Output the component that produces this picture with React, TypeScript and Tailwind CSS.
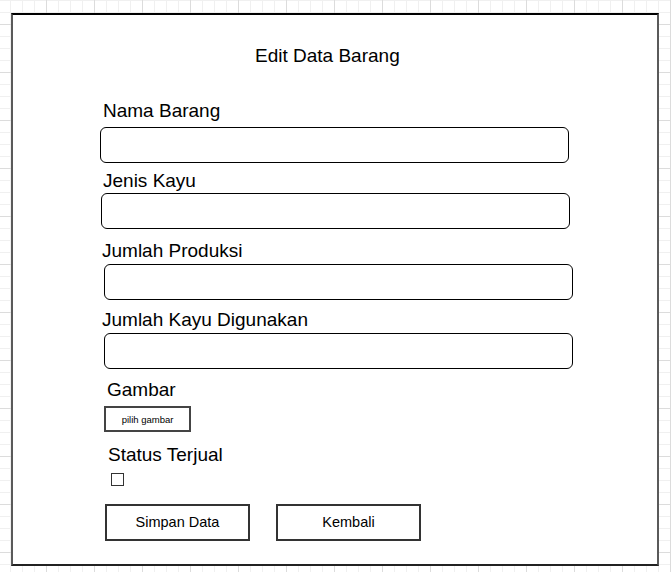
export default function App() {
  const label = 'text-[19px] leading-[22px] text-black';
  const input = 'h-9 w-[469px] rounded-[6px] border border-black bg-white';

  return (
    <div
      className="w-[671px] h-[572px] overflow-hidden bg-white pt-[13px] pl-[11px] bg-[linear-gradient(to_right,#dcdcdc_1px,transparent_1px),linear-gradient(to_bottom,#dcdcdc_1px,transparent_1px),linear-gradient(to_right,#f0f0f0_1px,transparent_1px),linear-gradient(to_bottom,#f0f0f0_1px,transparent_1px)] bg-size-[48px_48px,48px_48px,12px_12px,12px_12px] bg-position-[46px_24px,46px_24px,10px_0px,10px_0px]"
      style={{ fontFamily: '"Liberation Sans", Arial, sans-serif' }}
    >
      {/* Bingkai form */}
      <div className="w-[648px] h-[553px] border-2 border-[#5a5a5a] border-t-black border-b-[#222] bg-white flex flex-col">
        <h1 className="mt-[30px] ml-[242px] text-[19px] leading-[22px] text-black">Edit Data Barang</h1>

        <label className={`${label} mt-[33px] ml-[90px]`}>Nama Barang</label>
        <div className={`${input} mt-[5px] ml-[87px]`} />

        <label className={`${label} mt-[7px] ml-[90px]`}>Jenis Kayu</label>
        <div className={`${input} mt-[1px] ml-[88px]`} />

        <label className={`${label} mt-[11px] ml-[89px]`}>Jumlah Produksi</label>
        <div className={`${input} mt-[2px] ml-[91px]`} />

        <label className={`${label} mt-[9px] ml-[89px]`}>Jumlah Kayu Digunakan</label>
        <div className={`${input} mt-[2px] ml-[91px]`} />

        <label className={`${label} mt-[10px] ml-[94px]`}>Gambar</label>
        <button className="mt-[5px] ml-[91px] w-[87px] h-[26px] border-2 border-[#444] bg-white text-[9.5px] leading-none pt-[2px] text-black flex items-center justify-center">
          pilih gambar
        </button>

        <label className={`${label} mt-[12px] ml-[95px]`}>Status Terjual</label>
        <div className="mt-[7px] ml-[98px] w-[13px] h-[13px] border-[1.5px] border-[#333] bg-white" />

        <div className="mt-[18px] ml-[92px] flex gap-[26px]">
          <button className="w-[145px] h-[37px] border-2 border-[#333] bg-white text-[14.5px] text-black">
            Simpan Data
          </button>
          <button className="w-[145px] h-[37px] border-2 border-[#333] bg-white text-[14.5px] text-black">
            Kembali
          </button>
        </div>
      </div>
    </div>
  );
}
